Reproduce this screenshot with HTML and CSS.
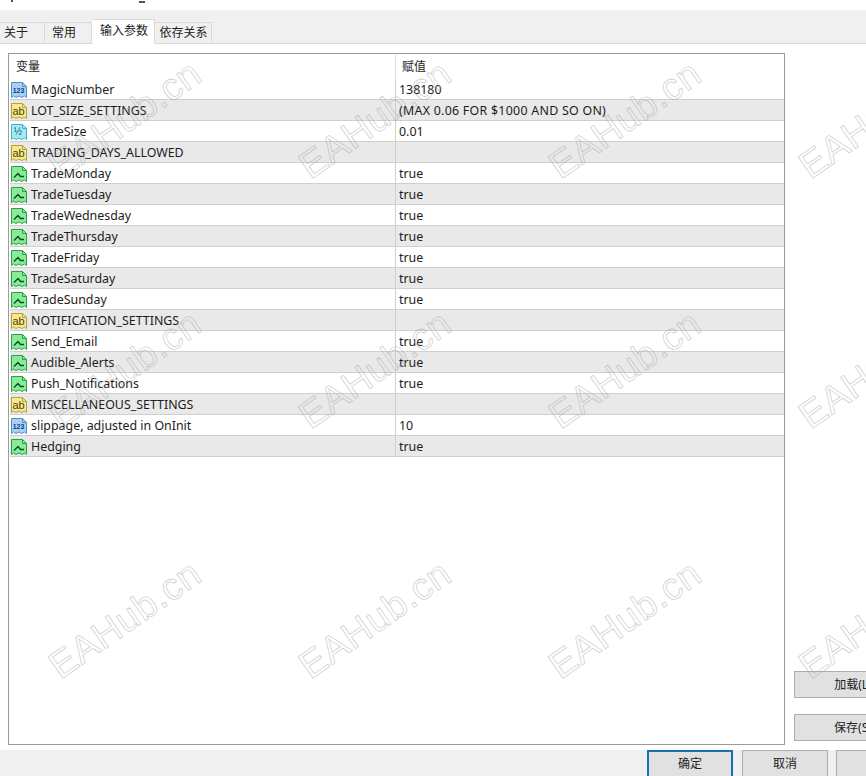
FILE: index.html
```html
<!DOCTYPE html>
<html lang="zh">
<head>
<meta charset="utf-8">
<title>输入参数</title>
<link rel="stylesheet" href="styles.css">
</head>
<body>
<svg class="defs" width="0" height="0" aria-hidden="true">
  <defs>
    <path id="doc" d="M.5 .5H11.5L15.5 4.5V15.5L13.5 14L11 15.5L8 14L5 15.5L2.5 14L.5 15.5Z"/>
    <path id="fold" d="M11.5 .5V4.5H15.5"/>
  </defs>
</svg>
<div class="page">
  <div class="titlebar"><span class="title-bit a"></span><span class="title-bit b"></span></div>
  <div class="tabs">
    <div class="tab t1">关于</div>
    <div class="tab t2">常用</div>
    <div class="tab active">输入参数</div>
    <div class="tab t4">依存关系</div>
  </div>
  <div class="main">
    <div class="list">
      <div class="head"><div class="head-name">变量</div><div class="head-val">赋值</div></div>
      <div class="row"><div class="name"><svg class="ic blue" viewBox="0 0 16 16"><use href="#doc"/><use href="#fold" class="f"/><text x="7.5" y="11">123</text></svg>MagicNumber</div><div class="val">138180</div></div>
      <div class="row"><div class="name"><svg class="ic yellow" viewBox="0 0 16 16"><use href="#doc"/><use href="#fold" class="f"/><text x="7.5" y="11.5" class="big">ab</text></svg>LOT_SIZE_SETTINGS</div><div class="val wide">(MAX 0.06 FOR $1000 AND SO ON)</div></div>
      <div class="row"><div class="name"><svg class="ic cyan" viewBox="0 0 16 16"><use href="#doc"/><use href="#fold" class="f"/><text x="7" y="11">½</text></svg>TradeSize</div><div class="val">0.01</div></div>
      <div class="row"><div class="name"><svg class="ic yellow" viewBox="0 0 16 16"><use href="#doc"/><use href="#fold" class="f"/><text x="7.5" y="11.5" class="big">ab</text></svg>TRADING_DAYS_ALLOWED</div><div class="val"></div></div>
      <div class="row"><div class="name"><svg class="ic green" viewBox="0 0 16 16"><use href="#doc"/><use href="#fold" class="f"/><path class="ln" d="M3 11.5L7 7.5L9.5 10.5H13"/></svg>TradeMonday</div><div class="val">true</div></div>
      <div class="row"><div class="name"><svg class="ic green" viewBox="0 0 16 16"><use href="#doc"/><use href="#fold" class="f"/><path class="ln" d="M3 11.5L7 7.5L9.5 10.5H13"/></svg>TradeTuesday</div><div class="val">true</div></div>
      <div class="row"><div class="name"><svg class="ic green" viewBox="0 0 16 16"><use href="#doc"/><use href="#fold" class="f"/><path class="ln" d="M3 11.5L7 7.5L9.5 10.5H13"/></svg>TradeWednesday</div><div class="val">true</div></div>
      <div class="row"><div class="name"><svg class="ic green" viewBox="0 0 16 16"><use href="#doc"/><use href="#fold" class="f"/><path class="ln" d="M3 11.5L7 7.5L9.5 10.5H13"/></svg>TradeThursday</div><div class="val">true</div></div>
      <div class="row"><div class="name"><svg class="ic green" viewBox="0 0 16 16"><use href="#doc"/><use href="#fold" class="f"/><path class="ln" d="M3 11.5L7 7.5L9.5 10.5H13"/></svg>TradeFriday</div><div class="val">true</div></div>
      <div class="row"><div class="name"><svg class="ic green" viewBox="0 0 16 16"><use href="#doc"/><use href="#fold" class="f"/><path class="ln" d="M3 11.5L7 7.5L9.5 10.5H13"/></svg>TradeSaturday</div><div class="val">true</div></div>
      <div class="row"><div class="name"><svg class="ic green" viewBox="0 0 16 16"><use href="#doc"/><use href="#fold" class="f"/><path class="ln" d="M3 11.5L7 7.5L9.5 10.5H13"/></svg>TradeSunday</div><div class="val">true</div></div>
      <div class="row"><div class="name"><svg class="ic yellow" viewBox="0 0 16 16"><use href="#doc"/><use href="#fold" class="f"/><text x="7.5" y="11.5" class="big">ab</text></svg>NOTIFICATION_SETTINGS</div><div class="val"></div></div>
      <div class="row"><div class="name"><svg class="ic green" viewBox="0 0 16 16"><use href="#doc"/><use href="#fold" class="f"/><path class="ln" d="M3 11.5L7 7.5L9.5 10.5H13"/></svg>Send_Email</div><div class="val">true</div></div>
      <div class="row"><div class="name"><svg class="ic green" viewBox="0 0 16 16"><use href="#doc"/><use href="#fold" class="f"/><path class="ln" d="M3 11.5L7 7.5L9.5 10.5H13"/></svg>Audible_Alerts</div><div class="val">true</div></div>
      <div class="row"><div class="name"><svg class="ic green" viewBox="0 0 16 16"><use href="#doc"/><use href="#fold" class="f"/><path class="ln" d="M3 11.5L7 7.5L9.5 10.5H13"/></svg>Push_Notifications</div><div class="val">true</div></div>
      <div class="row"><div class="name"><svg class="ic yellow" viewBox="0 0 16 16"><use href="#doc"/><use href="#fold" class="f"/><text x="7.5" y="11.5" class="big">ab</text></svg>MISCELLANEOUS_SETTINGS</div><div class="val"></div></div>
      <div class="row"><div class="name"><svg class="ic blue" viewBox="0 0 16 16"><use href="#doc"/><use href="#fold" class="f"/><text x="7.5" y="11">123</text></svg>slippage, adjusted in OnInit</div><div class="val">10</div></div>
      <div class="row"><div class="name"><svg class="ic green" viewBox="0 0 16 16"><use href="#doc"/><use href="#fold" class="f"/><path class="ln" d="M3 11.5L7 7.5L9.5 10.5H13"/></svg>Hedging</div><div class="val">true</div></div>
    </div>
    <div class="side">
      <div class="btn side-btn">加载(L)</div>
      <div class="btn side-btn">保存(S)</div>
    </div>
  </div>
  <div class="footer">
    <div class="btn foot-btn primary">确定</div>
    <div class="btn foot-btn">取消</div>
    <div class="btn foot-btn"></div>
  </div>
</div>
<div class="marks" aria-hidden="true">
  <span class="mark m1">EAHub.cn</span><span class="mark m2">EAHub.cn</span><span class="mark m3">EAHub.cn</span><span class="mark m4">EAHub.cn</span>
  <span class="mark m5">EAHub.cn</span><span class="mark m6">EAHub.cn</span><span class="mark m7">EAHub.cn</span><span class="mark m8">EAHub.cn</span>
  <span class="mark m9">EAHub.cn</span><span class="mark m10">EAHub.cn</span><span class="mark m11">EAHub.cn</span><span class="mark m12">EAHub.cn</span>
</div>
</body>
</html>
```
FILE: styles.css
```css
* { box-sizing: border-box; }
html, body { margin: 0; height: 776px; overflow: hidden; background: #fff; }
body {
  position: relative;
  width: 866px;
  font-family: "Noto Sans", "Noto Sans CJK SC", sans-serif;
  font-size: 12.4px;
  color: #1c1c1c;
}
.defs { position: absolute; }
.page { display: flex; flex-direction: column; height: 776px; overflow: hidden; }

.titlebar { height: 10px; background: #fff; display: flex; flex: none; }
.title-bit { height: 2px; background: #555; }
.title-bit.a { width: 2px; margin-left: 11px; }
.title-bit.b { width: 6px; margin-left: 126px; margin-top: 1px; }

.tabs {
  flex: none;
  height: 34px;
  display: flex;
  align-items: flex-end;
  background: #f0f0f0;
  border-bottom: 1px solid #d9d9d9;
  font-size: 12px;
}
.tab {
  height: 22px;
  margin-bottom: -1px;
  background: #f0f0f0;
  border: 1px solid #d9d9d9;
  border-left: 0;
  display: flex;
  align-items: center;
  justify-content: center;
  padding-bottom: 2px;
  color: #222;
}
.t1 { width: 45px; justify-content: flex-start; padding-left: 4px; }
.t2 { width: 47px; justify-content: flex-start; padding-left: 7px; }
.t4 { width: 57px; padding-left: 1px; }
.tab.active {
  width: 63px;
  height: 25px;
  background: #fff;
  border-bottom-color: #fff;
  padding-bottom: 3px;
  padding-left: 2px;
}

.main { flex: 1; min-height: 0; display: flex; padding: 9px 0 5px 8px; background: #fff; }
.list { flex: none; width: 777px; border: 1px solid #9b9b9b; background: #fff; }
.head { display: flex; height: 25px; font-size: 12px; }
.head-name { width: 386px; padding: 3px 0 0 7px; }
.head-val { padding: 3px 0 0 6px; border-left: 1px solid #e0e0e0; flex: 1; }

.row { display: flex; height: 21px; border-bottom: 1px solid #cfcfcf; margin-left: 1px; line-height: 20px; }
.row:nth-child(odd) { background: #e9e9e9; }
.name { width: 385px; display: flex; align-items: center; padding: 2px 0 0 1px; white-space: nowrap; }
.val { flex: 1; border-left: 1px solid #cfcfcf; padding: 1px 0 0 3px; white-space: nowrap; }
.wide { letter-spacing: 0.27px; }

.ic { width: 16px; height: 16px; margin-right: 4px; flex: none; }
.ic text { font-family: "Liberation Sans", sans-serif; font-size: 7px; font-weight: 700; text-anchor: middle; }
.ic text.big { font-size: 11px; font-weight: 400; }
.ic .f { fill: none; stroke-width: 1; }
.ic .ln { fill: none; stroke: #0d4d1c; stroke-width: 1.4; }
.blue use { fill: #a8d2f5; stroke: #4f8fc9; }
.blue text { fill: #10407a; }
.yellow use { fill: #f7e98c; stroke: #b5a136; }
.yellow text { fill: #4a3f05; }
.cyan use { fill: #a5ecf2; stroke: #3fb4c4; }
.cyan text { fill: #0e5a6e; font-size: 10px; font-weight: 400; }
.green use { fill: #86ec98; stroke: #2f9e46; }

.side {
  flex: 1;
  min-width: 0;
  margin-left: 9px;
  display: flex;
  flex-direction: column;
  justify-content: flex-end;
  align-items: flex-start;
  gap: 16px;
  padding-bottom: 4px;
}
.btn {
  background: #e1e1e1;
  border: 1px solid #adadad;
  display: flex;
  align-items: center;
  justify-content: center;
  font-size: 12px;
  color: #222;
}
.side-btn { width: 118px; height: 27px; flex: none; padding-bottom: 1px; }

.footer {
  flex: none;
  height: 26px;
  background: #f0f0f0;
  display: flex;
  gap: 9px;
  padding-left: 647px;
  overflow: hidden;
}
.foot-btn { width: 86px; height: 30px; flex: none; padding-bottom: 4px; }
.foot-btn:last-child { margin-left: -1px; }
.primary { border: 2px solid #1a70ac; }

.marks { position: absolute; inset: 0; overflow: hidden; pointer-events: none; }
.mark {
  position: absolute;
  font-family: "Liberation Sans", sans-serif;
  font-size: 38px;
  letter-spacing: 0.5px;
  line-height: 1;
  color: transparent;
  -webkit-text-stroke: 0.8px rgba(160, 160, 160, 0.5);
  transform: rotate(-35deg);
  transform-origin: 0 100%;
  white-space: nowrap;
}
.m1 { left: 64px; top: 147px; }
.m2 { left: 314px; top: 147px; }
.m3 { left: 564px; top: 147px; }
.m4 { left: 814px; top: 147px; }
.m5 { left: 64px; top: 397px; }
.m6 { left: 314px; top: 397px; }
.m7 { left: 564px; top: 397px; }
.m8 { left: 814px; top: 397px; }
.m9 { left: 64px; top: 647px; }
.m10 { left: 314px; top: 647px; }
.m11 { left: 564px; top: 647px; }
.m12 { left: 814px; top: 647px; }
```
